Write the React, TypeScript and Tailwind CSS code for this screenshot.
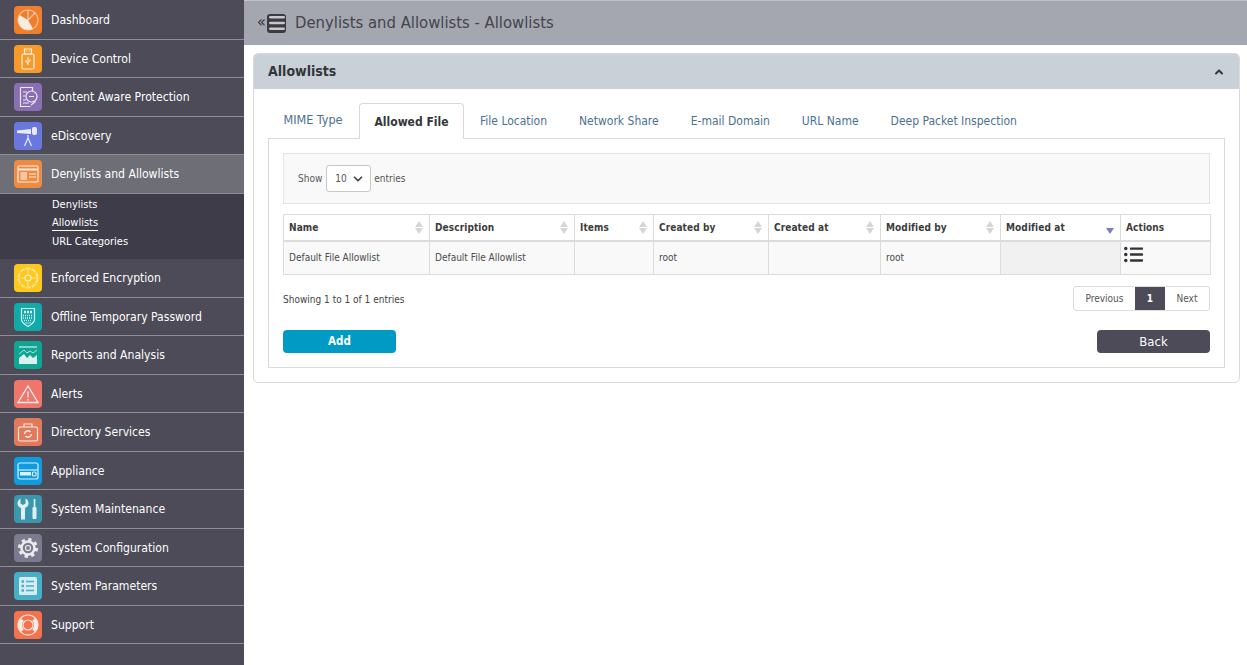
import { ChevronDown, ChevronUp, Menu } from "lucide-react";
import type { ReactNode } from "react";
import { FaListUl } from "react-icons/fa";

const tahoma = "[font-family:'DejaVu_Sans_Condensed','DejaVu_Sans',sans-serif]";

function IconBox({ color, children }: { color: string; children: ReactNode }) {
	return (
		<div
			className="flex size-[28px] shrink-0 items-center justify-center rounded-[4px]"
			style={{ backgroundColor: color }}
		>
			<svg
				viewBox="0 0 28 28"
				className="size-[28px]"
				fill="none"
				stroke="#fff"
				strokeWidth="1.2"
				opacity="0.85"
			>
				{children}
			</svg>
		</div>
	);
}

const menu: { label: string; color: string; icon: ReactNode }[] = [
	{
		label: "Dashboard",
		color: "#ef7f2c",
		icon: (
			<>
				<circle cx="14" cy="14" r="10" opacity="0.6" />
				<path d="M14 14 L5.5 9 A10 10 0 0 0 19 22.7 Z" fill="#fff" stroke="none" />
				<path d="M14 14 L14 4 M14 14 L21 7" opacity="0.7" />
			</>
		),
	},
	{
		label: "Device Control",
		color: "#f79a29",
		icon: (
			<>
				<path d="M10.5 4h7v5h-7z" />
				<path d="M12.5 6h1M15 6h1" />
				<rect x="8" y="9" width="12" height="15" rx="1.5" />
				<path d="M14 12v8M12 15v2l2 1.5M16 14v2l-2 1.5" strokeWidth="1" />
			</>
		),
	},
	{
		label: "Content Aware Protection",
		color: "#8a6fb4",
		icon: (
			<>
				<path d="M6.5 4.5h12v4M6.5 4.5v19h10" />
				<circle cx="17.5" cy="13.5" r="5.5" />
				<path d="M15 13.5h5M9 9h4M9 13h2.5M9 17h3M9 20h6M17 22l4-3v-1" />
			</>
		),
	},
	{
		label: "eDiscovery",
		color: "#6a77dc",
		icon: (
			<>
				<path d="M3 8.5l14-1.5v5L3 11z" fill="#fff" stroke="none" />
				<rect x="18" y="5" width="5" height="8" rx="2" fill="#fff" stroke="none" />
				<path d="M14 13v3M14 16l-3.5 8M14 16l3.5 8" />
			</>
		),
	},
	{
		label: "Denylists and Allowlists",
		color: "#ef8a43",
		icon: (
			<>
				<rect x="4" y="6" width="20" height="16" rx="1" />
				<path d="M4 9.5h20" strokeWidth="2" />
				<rect x="6.5" y="12" width="6.5" height="8" fill="#fff" opacity="0.6" stroke="none" />
				<path d="M15 14h7M15 17h7" />
			</>
		),
	},
	{
		label: "Enforced Encryption",
		color: "#fec81e",
		icon: (
			<>
				<circle cx="14" cy="14" r="9.5" strokeDasharray="5 1" strokeWidth="2" opacity="0.6" />
				<circle cx="14" cy="14" r="3" />
				<path d="M14 6v4M14 18v4M6 14h4M18 14h4" opacity="0.6" />
			</>
		),
	},
	{
		label: "Offline Temporary Password",
		color: "#12a9ab",
		icon: (
			<>
				<path d="M7.5 5.5h13v11c0 3-3 5-6.5 7-3.5-2-6.5-4-6.5-7z" />
				<path d="M10 9h8" strokeWidth="2.5" strokeDasharray="2 1" />
				<path d="M9 12.5h10M9 15h10M10 17.5h8M11.5 20h5" strokeWidth="1.5" strokeDasharray="1 1" />
			</>
		),
	},
	{
		label: "Reports and Analysis",
		color: "#0ea592",
		icon: (
			<>
				<path d="M5 6h18" />
				<path d="M5 23v-6l5-4 3 4 3-3 3 3 4-3v9z" fill="#fff" stroke="none" />
				<path d="M5 13l5-4 3 3 3-2 3 2 4-3" strokeWidth="0.8" />
			</>
		),
	},
	{
		label: "Alerts",
		color: "#f0766c",
		icon: (
			<>
				<path d="M14 6l10 16.5H4z" strokeWidth="1.4" />
				<path d="M14 11.5v6M14 19v1.5" strokeWidth="1.4" />
			</>
		),
	},
	{
		label: "Directory Services",
		color: "#e2795a",
		icon: (
			<>
				<rect x="4.5" y="9" width="19" height="14" rx="1.5" />
				<path d="M10 9V6h8v3" />
				<path d="M10.5 16a3.5 3.5 0 0 1 6-2M17.5 16a3.5 3.5 0 0 1-6 2" strokeWidth="1.6" />
			</>
		),
	},
	{
		label: "Appliance",
		color: "#0f9be0",
		icon: (
			<>
				<rect x="4" y="6" width="20" height="16" rx="2" />
				<path d="M4 13h20" />
				<rect x="6" y="15" width="11" height="3.5" fill="#fff" stroke="none" />
				<rect x="18.5" y="15" width="3.5" height="4" rx="1" />
			</>
		),
	},
	{
		label: "System Maintenance",
		color: "#3b97ae",
		icon: (
			<>
				<path
					d="M6.5 3.5v5L9 10l2.5-1.5v-5c2.5 1 3 3.5 3 5 0 2-1.5 3.5-3.500 4.500v11.500H7V13C5 12 3.5 10.5 3.5 8.5c0-2 1-4 3-5z"
					fill="#fff"
					stroke="none"
				/>
				<path d="M20.5 4v8" strokeWidth="1.6" />
				<rect x="18.5" y="12" width="4" height="12" rx="1" fill="#fff" stroke="none" />
			</>
		),
	},
	{
		label: "System Configuration",
		color: "#7b7b90",
		icon: (
			<>
				<circle cx="14" cy="14" r="8.5" strokeDasharray="3.3 3.37" strokeWidth="3" />
				<circle cx="14" cy="14" r="6.5" strokeWidth="2.5" />
				<circle cx="14" cy="14" r="2.5" />
			</>
		),
	},
	{
		label: "System Parameters",
		color: "#48afc9",
		icon: (
			<>
				<rect x="5" y="5" width="18" height="18" rx="1.5" fill="#fff" stroke="none" opacity="0.9" />
				<path d="M12 9.5h8M12 14h8M12 18.5h8" stroke="#48afc9" strokeWidth="1.5" />
				<path d="M7.5 9.5h2.5M7.5 14h2.5M7.5 18.5h2.5" stroke="#48afc9" strokeWidth="2.5" />
			</>
		),
	},
	{
		label: "Support",
		color: "#f5734c",
		icon: (
			<>
				<circle cx="14" cy="14" r="10" />
				<circle cx="14" cy="14" r="5" />
				<path d="M8.3 8.3a8 8 0 0 0 0 11.4M19.7 8.3a8 8 0 0 1 0 11.4" strokeWidth="4" />
			</>
		),
	},
];

function MenuItem({ label, color, icon, active }: { label: string; color: string; icon: ReactNode; active?: boolean }) {
	return (
		<div
			className={`flex h-[38.5px] items-center gap-[9px] border-b border-[#8f8f9a] pl-[14px] text-[12.1px] text-white ${active ? "bg-[#6e6e76]" : ""}`}
		>
			<IconBox color={color}>{icon}</IconBox>
			<span className="pt-[1px]">{label}</span>
		</div>
	);
}

const columns = [
	{ name: "Name", w: "w-[146px]" },
	{ name: "Description", w: "w-[145px]" },
	{ name: "Items", w: "w-[79px]" },
	{ name: "Created by", w: "w-[115px]" },
	{ name: "Created at", w: "w-[112px]" },
	{ name: "Modified by", w: "w-[120px]" },
	{ name: "Modified at", w: "w-[120px]" },
	{ name: "Actions", w: "w-[90px]" },
];

const cells = ["Default File Allowlist", "Default File Allowlist", "", "root", "", "root", "", ""];

const tabs = ["File Location", "Network Share", "E-mail Domain", "URL Name", "Deep Packet Inspection"];

function SortIcon({ name }: { name: string }) {
	if (name === "Actions") return null;
	if (name === "Modified at") {
		return <span className="absolute right-[6px] top-[13px] h-0 w-0 border-x-[4px] border-t-[6px] border-x-transparent border-t-[#7b7bc8]" />;
	}
	return (
		<span className="absolute right-[6px] top-[6px] flex flex-col gap-[1px]">
			<span className="h-0 w-0 border-x-[4px] border-b-[6px] border-x-transparent border-b-[#d5d5d5]" />
			<span className="h-0 w-0 border-x-[4px] border-t-[6px] border-x-transparent border-t-[#d5d5d5]" />
		</span>
	);
}

export default function App() {
	return (
		<div className={`flex h-[665px] w-[1247px] overflow-hidden bg-white ${tahoma}`}>
			<aside className="h-full w-[244px] shrink-0 bg-[#4c4b57] pt-[1.25px]">
				{menu.slice(0, 5).map((m, i) => (
					<MenuItem key={m.label} {...m} active={i === 4} />
				))}
				<div className="flex h-[65.5px] flex-col gap-[3px] bg-[#3d3c48] pl-[52px] pt-[3px] text-[11px] leading-[16px] text-white">
					<span>Denylists</span>
					<span className="w-fit border-b border-white leading-[14px]">Allowlists</span>
					<span>URL Categories</span>
				</div>
				{menu.slice(5).map((m) => (
					<MenuItem key={m.label} {...m} />
				))}
			</aside>

			<main className="min-w-0 flex-1">
				<header className="flex h-[45px] items-center border-t border-[#c0c2c8] bg-[#a4a7af] pl-[13px]">
					<span className="-mt-[2px] w-[10px] text-[16px] leading-none text-[#33333a]">«</span>
					<span className="flex size-[19px] items-center justify-center overflow-hidden rounded-[3px] bg-[#3a3a40]">
						<Menu className="size-[20px] shrink-0 text-[#c8c8cc]" strokeWidth={3} />
					</span>
					<h1 className="ml-[9px] text-[16.5px] font-normal text-[#44444c]">Denylists and Allowlists - Allowlists</h1>
				</header>

				<section className="ml-[9px] mr-[7px] mt-[8px] rounded-[5px] border border-[#d9d9d9]">
					<div className="flex h-[35px] items-center justify-between rounded-t-[4px] bg-[#c9d0d7] px-[14px]">
						<h2 className="text-[14px] font-bold text-[#33363a]">Allowlists</h2>
						<ChevronUp className="size-[12px] text-[#33363a]" strokeWidth={4} />
					</div>

					<div className="px-[14px] pb-[14px] pt-[14px]">
						<div className="relative z-10 flex h-[35px] items-stretch text-[12px] text-[#4a7194]">
							<span className="flex w-[90px] items-center justify-center text-[12.5px]">MIME Type</span>
							<span className="-mb-px ml-[1px] flex w-[105px] items-center justify-center rounded-t-[4px] border border-b-0 border-[#d9d9d9] bg-white font-bold text-[#33363a]">
								Allowed File
							</span>
							<div className="ml-[16px] flex items-center gap-[32px]">
								{tabs.map((t) => (
									<span key={t}>{t}</span>
								))}
							</div>
						</div>

						<div className="border border-[#d9d9d9] px-[14px] pb-[14px] pt-[14px]">
							<div className="flex h-[51px] items-center border border-[#e4e4e4] bg-[#f9f9f9] pl-[14px] text-[10px] text-[#555]">
								<span className="mr-[4px]">Show</span>
								<div className="mr-[3px] flex h-[27px] w-[45px] items-center justify-between rounded-[3px] border border-[#c9c9c9] bg-white pl-[8px] pr-[5px]">
									<span>10</span>
									<ChevronDown className="size-[14px] text-[#444]" strokeWidth={3} />
								</div>
								<span>entries</span>
							</div>

							<table className="mt-[10px] w-full table-fixed border-collapse text-[10px]">
								<thead>
									<tr>
										{columns.map((c) => (
											<th
												key={c.name}
												className={`relative h-[26px] border border-b-2 border-[#dcdcdc] px-[5px] text-left font-bold tracking-[0.1px] text-[#3c3c3c] ${c.w}`}
											>
												{c.name}
												<SortIcon name={c.name} />
											</th>
										))}
									</tr>
								</thead>
								<tbody>
									<tr>
										{cells.map((c, i) => (
											<td
												key={i}
												className={`h-[34px] border border-[#dcdcdc] px-[5px] font-normal text-[#4a4a4a] ${i === 6 ? "bg-[#f1f1f1]" : "bg-[#f9f9f9]"}`}
											>
												{i === 7 ? <FaListUl className="-ml-[2px] -mt-[6px] size-[19px] text-[#33333a]" /> : c}
											</td>
										))}
									</tr>
								</tbody>
							</table>

							<div className="mt-[11px] flex items-start justify-between text-[10px] text-[#444]">
								<span className="pt-[6px]">Showing 1 to 1 of 1 entries</span>
								<div className="flex h-[25px] items-stretch overflow-hidden rounded-[3px] border border-[#dcdcdc] text-[#555]">
									<span className="flex w-[61px] items-center justify-center">Previous</span>
									<span className="flex w-[30px] items-center justify-center bg-[#4c4b57] font-bold text-white">1</span>
									<span className="flex w-[44px] items-center justify-center">Next</span>
								</div>
							</div>

							<div className="mt-[19px] flex justify-between text-white">
								<button className="h-[23px] w-[113px] rounded-[4px] bg-[#009bc4] text-[11.5px] font-bold">Add</button>
								<button className="h-[23px] w-[113px] rounded-[4px] bg-[#4c4b57] text-[13px] font-normal">Back</button>
							</div>
						</div>
					</div>
				</section>
			</main>
		</div>
	);
}
